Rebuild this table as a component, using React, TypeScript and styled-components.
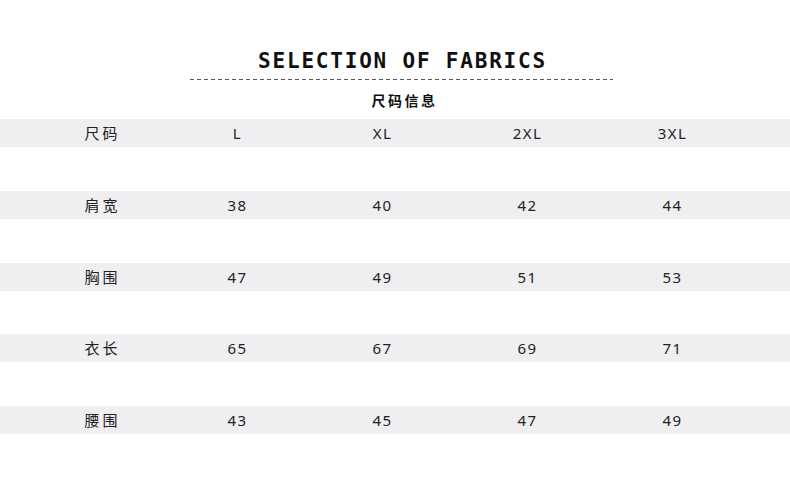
import styled, { createGlobalStyle } from "styled-components";

const GlobalStyle = createGlobalStyle`
  html, body {
    margin: 0;
    padding: 0;
    background: #ffffff;
  }
`;

const sizes = ["L", "XL", "2XL", "3XL"];

const rows = [
  { label: "尺码", values: sizes },
  { label: "肩宽", values: ["38", "40", "42", "44"] },
  { label: "胸围", values: ["47", "49", "51", "53"] },
  { label: "衣长", values: ["65", "67", "69", "71"] },
  { label: "腰围", values: ["43", "45", "47", "49"] },
];

export default function App() {
  return (
    <Page>
      <GlobalStyle />
      <Header>
        <Title>SELECTION OF FABRICS</Title>
        <Dashes />
        <SubTitle>尺码信息</SubTitle>
      </Header>
      <Table>
        {rows.map((row) => (
          <Row key={row.label}>
            <Cell $cjk>{row.label}</Cell>
            {row.values.map((v, i) => (
              <Cell key={i}>{v}</Cell>
            ))}
          </Row>
        ))}
      </Table>
    </Page>
  );
}

const Page = styled.div`
  width: 790px;
  height: 480px;
  background: #fff;
  overflow: hidden;
  font-family: "Noto Sans", "Noto Sans CJK SC", sans-serif;
  color: #222;
`;

const Header = styled.div`
  display: flex;
  flex-direction: column;
  align-items: center;
  padding-top: 47px;
  padding-left: 13px;
  width: 790px;
  box-sizing: border-box;
`;

const Title = styled.div`
  font-family: "DejaVu Sans Mono", "Liberation Mono", monospace;
  font-weight: bold;
  font-size: 21px;
  line-height: 28px;
  letter-spacing: 1.8px;
  color: #111;
  padding-left: 2px;
`;

const Dashes = styled.div`
  width: 423px;
  height: 1px;
  margin-top: 4px;
  background: repeating-linear-gradient(
    90deg,
    #555 0,
    #555 4px,
    transparent 4px,
    transparent 7px
  );
`;

const SubTitle = styled.div`
  font-family: "Noto Sans CJK SC", sans-serif;
  font-weight: bold;
  font-size: 14px;
  line-height: 20px;
  letter-spacing: 2.5px;
  margin-top: 10px;
  padding-left: 6px;
  color: #111;
`;

const Table = styled.div`
  display: flex;
  flex-direction: column;
  gap: 43.75px;
  margin-top: 9px;
`;

const Row = styled.div`
  display: grid;
  grid-template-columns: 125px repeat(4, 145px);
  padding-left: 40px;
  height: 28px;
  align-items: center;
  background: #efeff1;
`;

const Cell = styled.div<{ $cjk?: boolean }>`
  text-align: center;
  font-family: ${(p) =>
    p.$cjk ? `"Noto Sans CJK SC", sans-serif` : `"Noto Sans", sans-serif`};
  font-size: 15px;
  letter-spacing: ${(p) => (p.$cjk ? "3px" : "1.5px")};
  line-height: 20px;
  color: #222;
`;
